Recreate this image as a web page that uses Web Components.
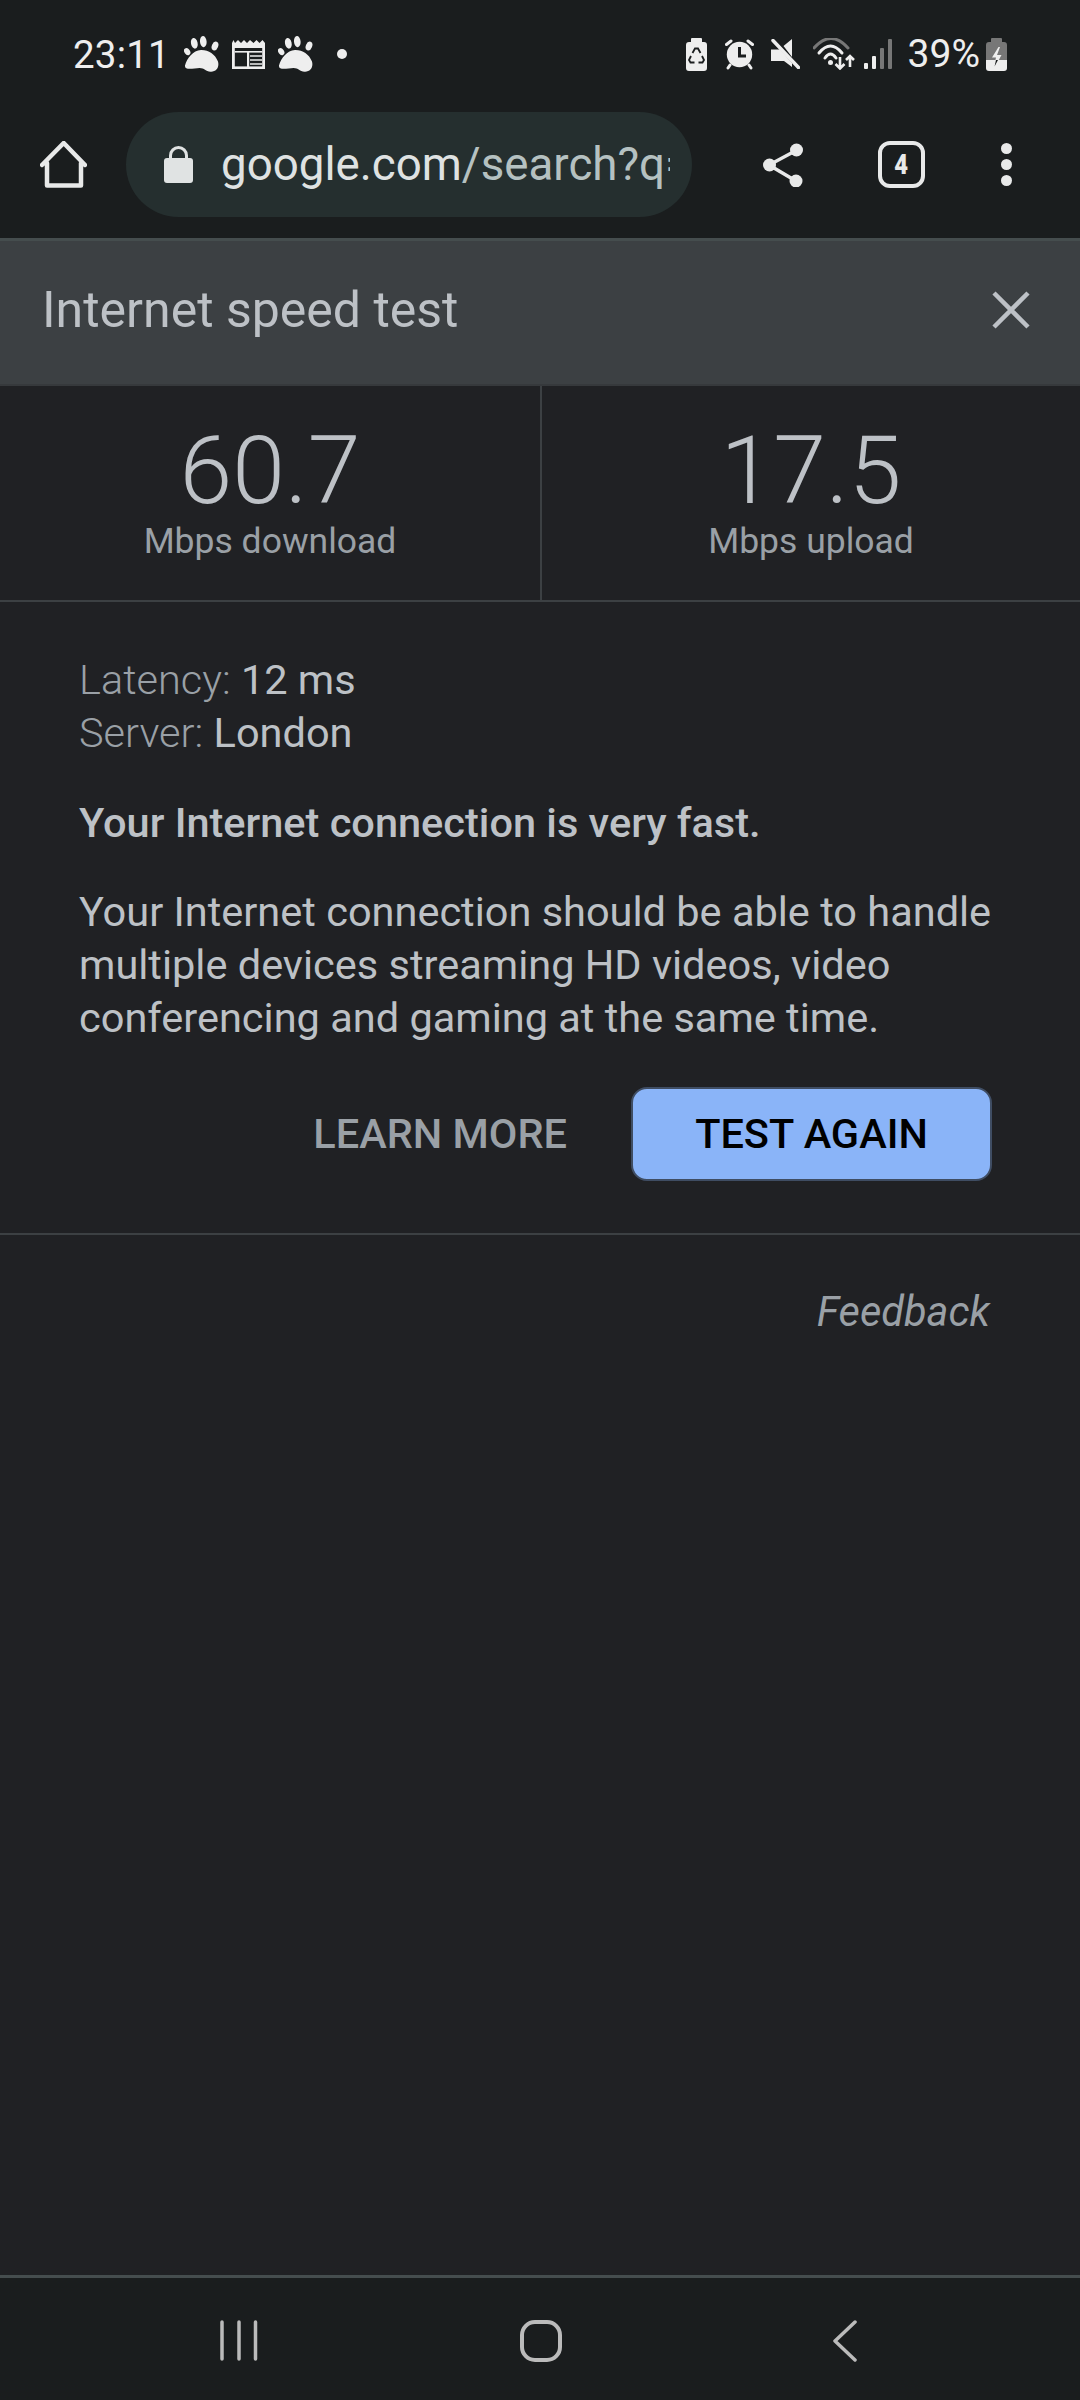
<!DOCTYPE html>
<html><head><meta charset="utf-8">
<style>
html,body{margin:0;padding:0;background:#202124}
body{width:1080px;height:2400px;font-family:Roboto,"Noto Sans",sans-serif;display:flex;flex-direction:column;overflow:hidden}
</style></head><body>
<status-bar></status-bar>
<browser-toolbar></browser-toolbar>
<speed-page>
  <speed-header>Internet speed test</speed-header>
  <speed-stats></speed-stats>
  <speed-details></speed-details>
</speed-page>
<nav-bar></nav-bar>
<script>
const def=(name,html)=>customElements.define(name,class extends HTMLElement{constructor(){super();this.attachShadow({mode:'open'}).innerHTML=html}});
const paw=`<svg width="35" height="36" viewBox="0 0 35 36" fill="#eee"><ellipse cx="3.2" cy="15.7" rx="2.8" ry="3.8" transform="rotate(-35 3.2 15.7)"/><ellipse cx="10.3" cy="7.3" rx="3.3" ry="5.4" transform="rotate(-12 10.3 7.3)"/><ellipse cx="19.3" cy="5.6" rx="3.3" ry="5.6" transform="rotate(-5 19.3 5.6)"/><ellipse cx="31" cy="10" rx="3.1" ry="4.6" transform="rotate(22 31 10)"/><path d="M1 29.5C3 22 9 14.500 17 14C24.500 13.800 31 18 34 25.500C35.500 31 32.500 36 26.500 35.700C21.500 35.400 20.500 32 15.500 32C10 32 .5 35 1 29.500Z"/></svg>`;
def('status-bar',`<style>
:host{display:flex;align-items:center;height:108px;background:#1a1d1e;color:#eee;padding:0 73px;box-sizing:border-box;flex:none;font:400 38.500px Roboto,sans-serif}
svg{display:block;flex:none}
.t{width:94px;margin-right:17px;letter-spacing:.2px}
.l{display:flex;align-items:center}
.r{display:flex;align-items:center;margin-left:auto}
.p{margin:0 6px 0 16px;white-space:nowrap;font-size:39px}
</style>
<div class="l"><span class="t">23:11</span>${paw}
<svg style="margin-left:13px" width="33" height="30" viewBox="0 0 33 30"><path d="M0 4V30H33V4L30.500 1L27.500 4L24.500 1L21.500 4L18 1L15 4L12 1L9 4L6 1L3 4L1.500 1Z" fill="#eee"/><rect x="2.800" y="9" width="27.400" height="18.400" fill="#1a1d1e"/><rect x="2.800" y="12" width="27.400" height="1.600" fill="#eee"/><rect x="15" y="12" width="2.200" height="16" fill="#eee"/><path d="M18 17h12M18 21h12M18 25h12" stroke="#eee" stroke-width="1.700"/></svg>
<span style="margin-left:13px;display:flex">${paw}</span>
<svg style="margin-left:24px" width="10" height="10" viewBox="0 0 10 10"><circle cx="5" cy="5" r="5" fill="#eee"/></svg></div>
<div class="r">
<svg width="21" height="33" viewBox="0 0 21 33"><path d="M6 0h9a1 1 0 0 1 1 1v3h2a3 3 0 0 1 3 3v23a3 3 0 0 1-3 3H3a3 3 0 0 1-3-3V7a3 3 0 0 1 3-3h2V1a1 1 0 0 1 1-1Z" fill="#eee"/><path d="M6.500 15L9 10.500h3L14.500 15M16 18l2 4-1.500 2.500h-4M8.500 24.500h-4L3 22l2-4" fill="none" stroke="#1a1d1e" stroke-width="1.800"/></svg>
<svg style="margin-left:18px" width="29" height="31" viewBox="0 0 29 31"><circle cx="14.500" cy="15.500" r="12.700" fill="#eee"/><path d="M14.500 8v9H21" fill="none" stroke="#1a1d1e" stroke-width="3"/><path d="M1.500 5.500L6 2M27.500 5.500L23 2M5 26l-2 3M24 26l2 3" stroke="#eee" stroke-width="3" stroke-linecap="round"/></svg>
<svg style="margin-left:17px" width="29" height="30" viewBox="0 0 29 30"><path d="M12.500 7L21 0V18Z M0 10.500H9L21 24V28L13 22H0Z" fill="#eee"/><path d="M2 1.500L27.500 28.500" stroke="#eee" stroke-width="3.500" stroke-linecap="round"/></svg>
<svg style="margin-left:13px" width="42" height="32" viewBox="0 0 42 32" fill="none"><path d="M1 10Q18 -9 35 10" stroke="#777" stroke-width="3" stroke-linecap="round"/><path d="M6 15Q17.500 1 29 15" stroke="#eee" stroke-width="3" stroke-linecap="round"/><path d="M12 20Q17.500 12 23 20" stroke="#eee" stroke-width="3" stroke-linecap="round"/><circle cx="17.500" cy="24.500" r="2.500" fill="#eee"/><path d="M27 19V30.500M22.500 26l4.500 4.500 4.500-4.500M37 29V18M33 22l4-4 4 4" stroke="#eee" stroke-width="2.600"/></svg>
<svg style="margin-left:9px" width="28" height="30" viewBox="0 0 28 30"><rect x="0" y="24" width="4" height="6" rx="1" fill="#eee"/><rect x="8" y="17" width="4" height="13" rx="1" fill="#eee"/><rect x="16" y="9" width="4" height="21" rx="1" fill="#777"/><rect x="24" y="0" width="4" height="30" rx="1" fill="#777"/></svg>
<span class="p">39%</span>
<svg width="21" height="33" viewBox="0 0 21 33"><path d="M6 0h9a1 1 0 0 1 1 1v3h2a3 3 0 0 1 3 3v15H0V7a3 3 0 0 1 3-3h2V1a1 1 0 0 1 1-1Z" fill="#777"/><path d="M0 22h21v8a3 3 0 0 1-3 3H3a3 3 0 0 1-3-3Z" fill="#eee"/><path d="M12.500 9L6 19.500h4L8 29l1 0 6.500-12H11l3-8Z" fill="#eee"/><path d="M10 22l-1.500 6.500 3.500-6.500Z" fill="#1a1d1e"/></svg>
</div>`);
def('browser-toolbar',`<style>
:host{display:flex;align-items:center;height:130px;background:#1a1d1e;flex:none;box-sizing:border-box;padding:0 0 0 40px;position:relative}
svg{display:block;flex:none}
.pill{width:566px;height:105px;margin:-17px 0 0 39px;border-radius:53px;background:#252f2f;display:flex;align-items:center;padding-left:38px;box-sizing:border-box;flex:none}
.u{margin-left:28px;width:449px;overflow:hidden;white-space:nowrap;font:400 45.700px/56px Roboto,sans-serif;color:#dfe2e2}
.u span{color:#b5c1c1}
.ic{margin-top:-17px}
.tab{width:47px;height:47px;box-sizing:border-box;border:4.500px solid #e8e9e9;border-radius:12px;color:#e8e9e9;display:flex;align-items:center;justify-content:center;font:700 28px Roboto,sans-serif;margin:-17px 0 0 75px;flex:none}
.tab b{display:block;transform:scaleX(.85)}
</style>
<svg class="ic" width="47" height="47" viewBox="0 0 47 47" fill="none" stroke="#e8e9e9" stroke-width="4.500" stroke-linejoin="round" stroke-linecap="round"><path d="M2 24L23.700 2L45 24M7 22V44.500H41V22"/></svg>
<div class="pill"><svg width="29" height="37" viewBox="0 0 29 37"><path d="M6.500 14V9.500a8 8 0 0 1 16 0V14" fill="none" stroke="#e0e3e3" stroke-width="3"/><rect y="12" width="29" height="25" rx="3" fill="#e0e3e3"/></svg><div class="u">google.com<span>/search?q=</span></div></div>
<svg class="ic" style="margin-left:71px" width="40" height="44" viewBox="0 0 40 44"><path d="M34 7L6 22L33 38" fill="none" stroke="#e8e9e9" stroke-width="3.500"/><circle cx="33.500" cy="7" r="6.500" fill="#e8e9e9"/><circle cx="6.500" cy="22" r="6.500" fill="#e8e9e9"/><circle cx="33" cy="38" r="6.500" fill="#e8e9e9"/></svg>
<div class="tab"><b>4</b></div>
<svg class="ic" style="margin-left:76px" width="11" height="43" viewBox="0 0 11 43" fill="#e8e9e9"><circle cx="5.500" cy="5.500" r="5.500"/><circle cx="5.500" cy="21.500" r="5.500"/><circle cx="5.500" cy="37.500" r="5.500"/></svg>`);
def('speed-page',`<style>:host{display:flex;flex-direction:column;flex:1;background:#202124;min-height:0}</style><slot></slot>`);
def('speed-header',`<style>
:host{display:flex;align-items:center;justify-content:space-between;height:148px;background:#3c4043;border-top:3px solid #454d4e;border-bottom:2px solid #36393c;box-sizing:border-box;padding:0 50px 5px 42px;color:#bdc1c6;font:400 50px/60px Roboto,sans-serif;flex:none}
svg{display:block}
</style><span><slot></slot></span><svg width="38" height="38" viewBox="0 0 38 38"><path d="M2 2L36 36M36 2L2 36" stroke="#bdc1c6" stroke-width="4.500"/></svg>`);
def('speed-stat',`<style>
:host{display:flex;flex-direction:column;align-items:center;flex:1;padding-top:35px;box-sizing:border-box}
.n{font:300 95px/100px Roboto,sans-serif;color:#bdc1c6}
.l{font:400 35.500px/36px Roboto,sans-serif;color:#9aa0a6;margin-top:1.500px}
</style><div class="n"><slot name="n"></slot></div><div class="l"><slot name="l"></slot></div>`);
def('speed-stats',`<style>
:host{display:flex;height:216px;border-bottom:2px solid #3c4043;box-sizing:border-box;flex:none}
speed-stat{flex:0 0 540px}
speed-stat+speed-stat{flex:1;border-left:2px solid #3c4043}
</style><speed-stat><span slot="n">60.7</span><span slot="l">Mbps download</span></speed-stat><speed-stat><span slot="n">17.5</span><span slot="l">Mbps upload</span></speed-stat>`);
def('speed-details',`<style>
:host{display:block;flex:none;font:400 41.500px/53px Roboto,sans-serif;color:#bdc1c6}
.b{padding:51px 88px 52px 79px;border-bottom:2px solid #3c4043}
.k{color:#9aa0a6;font-weight:300}
p{margin:0}
.h{font-weight:500;margin:36.500px 0 36px}
.txt{margin-right:-12px}
.a{display:flex;justify-content:flex-end;align-items:center;margin:43px 0 0 0;font-weight:500}
.lm{color:#9aa0a6;margin-right:64px}
.btn{width:361px;height:94px;box-sizing:border-box;background:#8ab4f8;border:2px solid #3f4d63;border-radius:16px;color:#000;display:flex;align-items:center;justify-content:center}
.f{text-align:right;font-style:italic;color:#9aa0a6;padding:50px 90px 0 0}
</style><div class="b">
<div><span class="k">Latency:</span> 12 ms</div>
<div><span class="k">Server:</span> London</div>
<p class="h">Your Internet connection is very fast.</p>
<p class="txt">Your Internet connection should be able to handle multiple devices streaming HD videos, video conferencing and gaming at the same time.</p>
<div class="a"><span class="lm">LEARN MORE</span><span class="btn">TEST AGAIN</span></div>
</div><div class="f">Feedback</div>`);
def('nav-bar',`<style>
:host{display:flex;align-items:center;height:125px;background:#1a1d1e;border-top:3px solid #454d4e;box-sizing:border-box;flex:none;padding:3px 0 0 220px}
svg{display:block}
</style>
<svg width="38" height="41" viewBox="0 0 38 41" stroke="#bbb" stroke-width="3.500" stroke-linecap="round"><path d="M2 2V39M19 2V39M35.500 2V39"/></svg>
<svg style="margin-left:262px" width="42" height="42" viewBox="0 0 42 42" fill="none"><rect x="2" y="2" width="38" height="38" rx="13" stroke="#bbb" stroke-width="4"/></svg>
<svg style="margin-left:271px" width="24" height="42" viewBox="0 0 24 42" fill="none"><path d="M22 2L2 21L22 40" stroke="#bbb" stroke-width="3.500" stroke-linecap="round" stroke-linejoin="round"/></svg>`);
</script>
</body></html>
